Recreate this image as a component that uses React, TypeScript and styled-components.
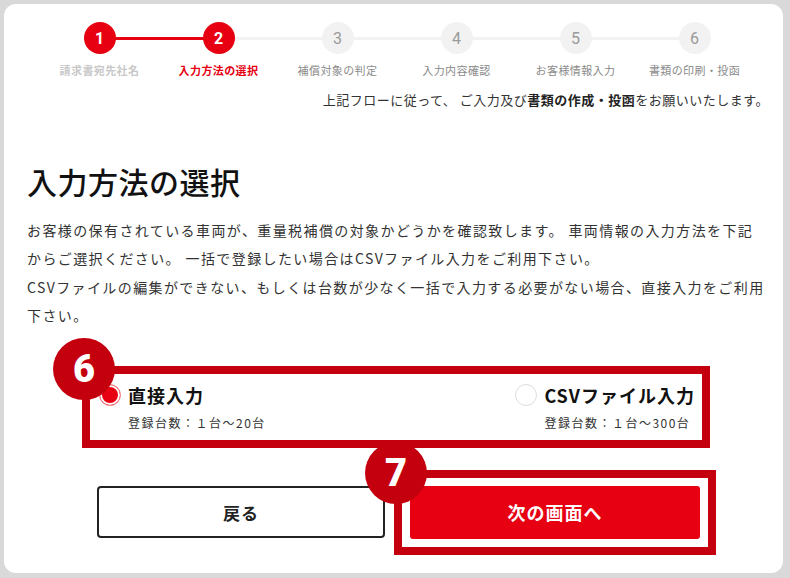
import React from "react";
import styled, { createGlobalStyle, css } from "styled-components";

const Global = createGlobalStyle`
  html, body { margin: 0; padding: 0; }
  body {
    background: #d9d9d9;
    font-family: "Noto Sans CJK JP", "Noto Sans", sans-serif;
    color: #333;
  }
`;

const RED = "#e60012";
const MARK = "#c4000f";

const Card = styled.div`
  margin: 4px 0 0 4px;
  width: 779px;
  height: 569px;
  background: #fff;
  border-radius: 12px;
  overflow: hidden;
  box-sizing: border-box;
`;

const Steps = styled.ol`
  list-style: none;
  margin: 0;
  padding: 18px 0 0 36px;
  display: flex;
`;

type StepState = "done" | "current" | "todo";

const Step = styled.li<{ $state: StepState; $line?: "red" | "gray" }>`
  position: relative;
  width: 119px;
  display: flex;
  flex-direction: column;
  align-items: center;
  ${({ $line }) =>
    $line &&
    css`
      &::after {
        content: "";
        position: absolute;
        left: 59.5px;
        top: 14.5px;
        width: 119px;
        height: 3px;
        background: ${$line === "red" ? RED : "#f2f2f2"};
        z-index: 0;
      }
    `}
`;

const Circle = styled.span<{ $state: StepState }>`
  position: relative;
  z-index: 1;
  width: 32px;
  height: 32px;
  border-radius: 50%;
  display: flex;
  align-items: center;
  justify-content: center;
  font-family: "Roboto", "Noto Sans", sans-serif;
  font-size: 16px;
  ${({ $state }) =>
    $state === "todo"
      ? css`
          background: #f2f2f2;
          color: #9a9a9a;
          font-weight: 400;
        `
      : css`
          background: ${RED};
          color: #fff;
          font-weight: 700;
        `}
`;

const StepLabel = styled.span<{ $state: StepState }>`
  margin-top: 8px;
  font-size: 11px;
  line-height: 16px;
  letter-spacing: 0.4px;
  white-space: nowrap;
  ${({ $state }) =>
    $state === "done"
      ? css`
          color: #c8c8c8;
          font-weight: 700;
        `
      : $state === "current"
      ? css`
          color: ${RED};
          font-weight: 700;
        `
      : css`
          color: #8a8a8a;
          font-weight: 400;
        `}
`;

const Note = styled.p`
  margin: 12px 0 0;
  padding-right: 14px;
  text-align: right;
  font-size: 13px;
  line-height: 20px;
  letter-spacing: 0.5px;
  color: #333;
  b {
    color: #222;
    font-weight: 700;
  }
`;

const Main = styled.section`
  padding-left: 23px;
`;

const Heading = styled.h1`
  margin: 51px 0 0;
  font-size: 30px;
  line-height: 40px;
  font-weight: 500;
  letter-spacing: 0.5px;
  color: #111;
`;

const Lead = styled.p`
  margin: 15px 0 0;
  font-size: 14px;
  line-height: 28.4px;
  letter-spacing: 1.4px;
  color: #333;
  white-space: nowrap;
`;

const Marked = styled.div`
  position: relative;
  border: 8px solid ${MARK};
  box-sizing: border-box;
`;

const Badge = styled.span`
  position: absolute;
  left: -37px;
  top: -36px;
  width: 62px;
  height: 62px;
  border-radius: 50%;
  background: ${MARK};
  color: #fff;
  display: flex;
  align-items: center;
  justify-content: center;
  font-family: "Roboto", "DejaVu Sans", sans-serif;
  font-weight: 900;
  font-size: 38px;
  line-height: 1;
  z-index: 2;
`;

const OptionBox = styled(Marked)`
  margin: 36px 0 0 78px;
  width: 628px;
  height: 82px;
  padding: 8px 7px 8px 9px;
  display: flex;
  justify-content: space-between;
  background: #fff;
`;

const Option = styled.label`
  display: flex;
  gap: 7px;
  cursor: pointer;
`;

const Radio = styled.span<{ $checked?: boolean }>`
  margin-top: 2px;
  width: 22px;
  height: 22px;
  box-sizing: border-box;
  border-radius: 50%;
  flex: none;
  ${({ $checked }) =>
    $checked
      ? css`
          border: 1.5px solid #f08c8c;
          background: ${RED};
          box-shadow: inset 0 0 0 2px #fff;
        `
      : css`
          border: 1.5px solid #dedede;
          background: #fff;
        `}
`;

const OptionText = styled.span`
  display: flex;
  flex-direction: column;
  gap: 6px;
`;

const OptionTitle = styled.span`
  font-size: 18px;
  line-height: 26px;
  font-weight: 700;
  letter-spacing: 1px;
  color: #111;
`;

const OptionSub = styled.span`
  font-size: 12px;
  line-height: 18px;
  letter-spacing: 1.5px;
  color: #333;
`;

const Actions = styled.div`
  margin-top: 22px;
  padding-left: 93px;
  display: flex;
  align-items: center;
  gap: 9px;
`;

const BackButton = styled.button`
  width: 288px;
  height: 52px;
  box-sizing: border-box;
  border: 2px solid #222;
  border-radius: 4px;
  background: #fff;
  font-family: "Noto Sans CJK JP", "Noto Sans", sans-serif;
  font-size: 17px;
  font-weight: 700;
  letter-spacing: 1px;
  color: #222;
`;

const NextBox = styled(Marked)`
  padding: 8px;
`;

const NextButton = styled.button`
  display: block;
  width: 290px;
  height: 53px;
  border: none;
  border-radius: 3px;
  background: ${RED};
  font-family: "Noto Sans CJK JP", "Noto Sans", sans-serif;
  font-size: 18px;
  font-weight: 700;
  letter-spacing: 1px;
  color: #fff;
`;

const steps: { n: number; label: string; state: StepState }[] = [
  { n: 1, label: "請求書宛先社名", state: "done" },
  { n: 2, label: "入力方法の選択", state: "current" },
  { n: 3, label: "補償対象の判定", state: "todo" },
  { n: 4, label: "入力内容確認", state: "todo" },
  { n: 5, label: "お客様情報入力", state: "todo" },
  { n: 6, label: "書類の印刷・投函", state: "todo" },
];

export default function App() {
  return (
    <>
      <Global />
      <Card>
        <Steps>
          {steps.map((s, i) => (
            <Step
              key={s.n}
              $state={s.state}
              $line={i < steps.length - 1 ? (i === 0 ? "red" : "gray") : undefined}
            >
              <Circle $state={s.state}>{s.n}</Circle>
              <StepLabel $state={s.state}>{s.label}</StepLabel>
            </Step>
          ))}
        </Steps>
        <Note>
          上記フローに従って、 ご入力及び<b>書類の作成・投函</b>をお願いいたします。
        </Note>
        <Main>
          <Heading>入力方法の選択</Heading>
          <Lead>
            お客様の保有されている車両が、重量税補償の対象かどうかを確認致します。 車両情報の入力方法を下記
            <br />
            からご選択ください。 一括で登録したい場合はCSVファイル入力をご利用下さい。
            <br />
            CSVファイルの編集ができない、もしくは台数が少なく一括で入力する必要がない場合、直接入力をご利用
            <br />
            下さい。
          </Lead>
        </Main>
        <OptionBox>
          <Badge>6</Badge>
          <Option>
            <Radio $checked />
            <OptionText>
              <OptionTitle>直接入力</OptionTitle>
              <OptionSub>登録台数：１台～20台</OptionSub>
            </OptionText>
          </Option>
          <Option>
            <Radio />
            <OptionText>
              <OptionTitle>CSVファイル入力</OptionTitle>
              <OptionSub>登録台数：１台～300台</OptionSub>
            </OptionText>
          </Option>
        </OptionBox>
        <Actions>
          <BackButton>戻る</BackButton>
          <NextBox>
            <Badge>7</Badge>
            <NextButton>次の画面へ</NextButton>
          </NextBox>
        </Actions>
      </Card>
    </>
  );
}
